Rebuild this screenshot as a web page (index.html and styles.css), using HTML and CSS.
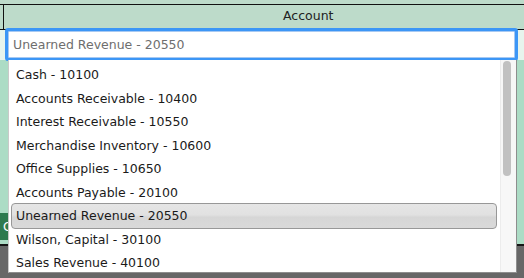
FILE: index.html
```html
<!DOCTYPE html>
<html lang="en">
<head>
    <meta charset="UTF-8">
    <title>Account picker</title>
    <link rel="stylesheet" href="styles.css">
</head>
<body>
    <div class="sheet">
        <div class="strip"></div>
        <div class="head">
            <div class="head-cell">Account</div>
        </div>
        <div class="edit-row">
            <input class="account-input" type="text" value="Unearned Revenue - 20550">
        </div>
        <div class="rows">
            <button class="close-btn">Close</button>
        </div>
    </div>

    <!-- open dropdown over the table -->
    <div class="dropdown">
        <ul class="options">
            <li class="option">Cash - 10100</li>
            <li class="option">Accounts Receivable - 10400</li>
            <li class="option">Interest Receivable - 10550</li>
            <li class="option">Merchandise Inventory - 10600</li>
            <li class="option">Office Supplies - 10650</li>
            <li class="option">Accounts Payable - 20100</li>
            <li class="option selected">Unearned Revenue - 20550</li>
            <li class="option">Wilson, Capital - 30100</li>
            <li class="option">Sales Revenue - 40100</li>
        </ul>
        <div class="scrollbar">
            <div class="thumb"></div>
        </div>
    </div>
</body>
</html>
```

FILE: styles.css
```css
body {
    margin: 0;
    background: #676767;
    font-family: "DejaVu Sans", Verdana, sans-serif;
    font-size: 12.5px;
    height: 278px;
    overflow: hidden;
    position: relative;
}

.sheet {
    background: #acdcc5;
    border-bottom: 2px solid #151515;
}

.strip {
    height: 4px;
    background: #bddbca;
}

.head {
    background: #bddbca;
    border-top: 1px solid #111;
    border-bottom: 1px solid #111;
    padding-left: 3px;
}

.head-cell {
    border-left: 1px solid #111;
    height: 24px;
    line-height: 22px;
    padding-left: 279px;
    color: #222;
}

.edit-row {
    background: #e7f4ed;
    height: 30px;
    box-sizing: border-box;
    padding: 1px 0 0 8px;
}

.account-input {
    display: block;
    box-sizing: border-box;
    width: 507px;
    height: 27px;
    margin: 0;
    padding: 0 0 0 4px;
    border: 1px solid #a7c9f2;
    box-shadow: 0 0 0 3px #3c96f6;
    border-radius: 1px;
    outline: none;
    font-family: inherit;
    font-size: 12.5px;
    color: #6e6e6e;
    background: #fff;
}

.rows {
    height: 184px;
    box-sizing: border-box;
    padding-top: 153px;
}

.close-btn {
    display: block;
    height: 27px;
    width: 8px;
    overflow: hidden;
    white-space: nowrap;
    border: none;
    margin: 0;
    padding: 0 0 0 3px;
    text-align: left;
    background: #2d7a4f;
    color: #fff;
    font-family: inherit;
    font-size: 12.5px;
}

.dropdown {
    position: absolute;
    left: 8px;
    top: 60px;
    width: 509px;
    height: 213px;
    box-sizing: border-box;
    background: #fff;
    border-left: 1px solid #c9c9c9;
    border-right: 1px solid #8e8e8e;
    border-bottom: 1px solid #8e8e8e;
    display: flex;
}

.options {
    flex: 1;
    list-style: none;
    margin: 0;
    padding: 3px 0 0 0;
}

.option {
    margin: 0 3px 0 2px;
    border: 1px solid transparent;
    border-radius: 4px;
    padding-left: 4px;
    line-height: 21.5px;
    color: #1a1a1a;
    white-space: nowrap;
}

.option.selected {
    margin-top: -1px;
    margin-bottom: -1px;
    padding-top: 1px;
    padding-bottom: 1px;
    border-color: #989898;
    background: linear-gradient(#e6e6e6 0%, #e1e1e1 45%, #d6d6d6 55%, #d9d9d9 100%);
}

.scrollbar {
    width: 15px;
    background: #f7f7f7;
    border-left: 1px solid #ececec;
}

.thumb {
    width: 8px;
    height: 115px;
    margin: 1px 0 0 2px;
    border-radius: 4px;
    background: #c1c1c1;
}
```
